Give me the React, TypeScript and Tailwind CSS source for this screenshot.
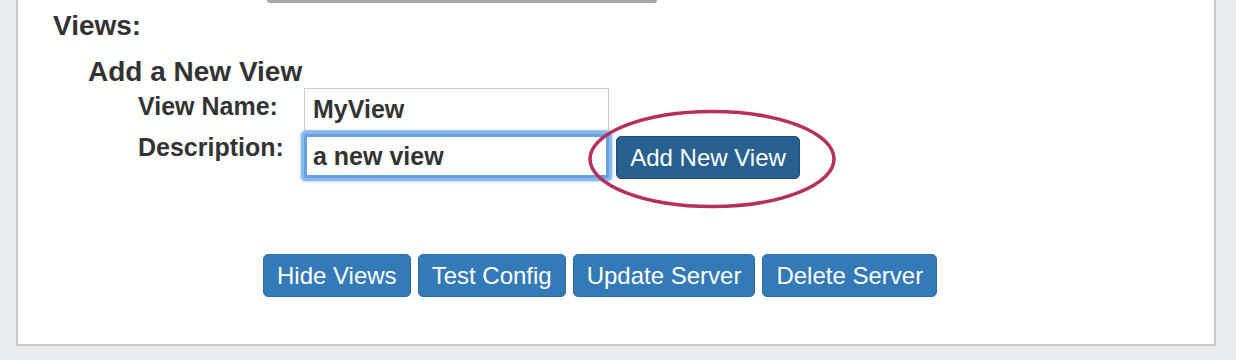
import React from "react";

const font = { fontFamily: '"Liberation Sans", Arial, sans-serif' };

const actions = ["Hide Views", "Test Config", "Update Server", "Delete Server"];

export default function App() {
  return (
    <div className="relative h-[360px] w-[1236px] bg-[#e9edf0] text-[#333]" style={font}>
      <div className="ml-[16px] h-[346px] w-[1200px] border-x-2 border-b-2 border-[#c8c8c8] bg-white">
        {/* bottom edge of the control above */}
        <div className="ml-[249px] h-[3px] w-[390px] rounded-b-[6px] bg-[#a6a6a6]" />

        <h4 className="mt-[7px] pl-[35px] text-[28px] font-bold leading-[32px]">Views:</h4>
        <h4 className="mt-[14px] pl-[70px] text-[28px] font-bold leading-[32px]">Add a New View</h4>

        <div>
          <div className="flex h-[43px] items-start">
            <label className="ml-[120px] w-[166px] pt-[4px] text-[25px] font-bold leading-[29px]">
              View Name:
            </label>
            <div className="h-[43px] w-[305px] border border-[#cccccc] bg-white px-2 text-[25px] font-bold leading-[41px]">
              MyView
            </div>
          </div>
          <div className="flex items-start">
            <label className="ml-[120px] w-[166px] pt-[2px] text-[25px] font-bold leading-[29px]">
              Description:
            </label>
            <div className="mt-[3px] h-[44px] w-[305px] rounded-[2px] border-[3px] border-[#64a2e4] bg-white px-[6px] text-[25px] font-bold leading-[38px] shadow-[0_0_0_3px_#86b9ee,0_0_3px_4px_rgba(102,175,233,0.45)]">
              a new view
            </div>
            <button className="ml-[7px] mt-[5px] h-[43px] w-[184px] rounded-[5px] border border-[#204d74] bg-[#286090] text-[24px] leading-[41px] text-white">
              Add New View
            </button>
          </div>
        </div>

        <div className="ml-[245px] mt-[75px] flex gap-[7px]">
          {actions.map((a) => (
            <button
              key={a}
              className="h-[43px] rounded-[5px] border border-[#2e6da4] bg-[#337ab7] px-[13px] text-[24px] leading-[41px] text-white"
            >
              {a}
            </button>
          ))}
        </div>
      </div>

      {/* annotation ring */}
      <svg className="absolute left-[586px] top-[108px]" width="252" height="102" viewBox="0 0 252 102">
        <ellipse cx="126" cy="51" rx="122" ry="47.5" fill="none" stroke="#b5305c" strokeWidth="3.5" />
      </svg>
    </div>
  );
}
